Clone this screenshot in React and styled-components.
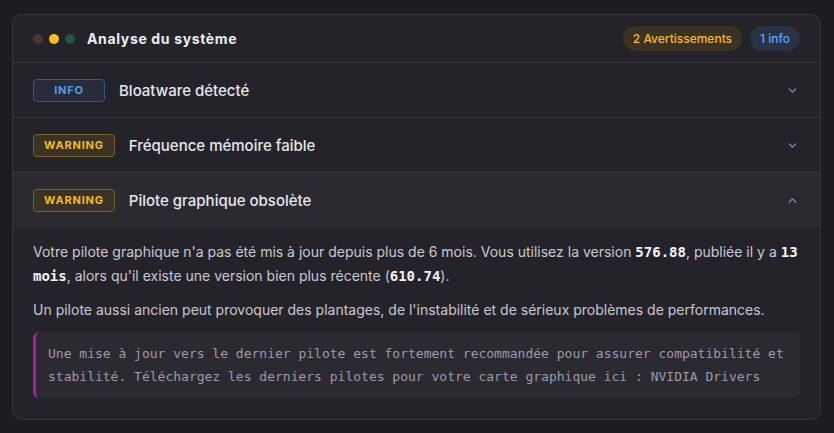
import React, { useState } from "react";
import styled, { createGlobalStyle } from "styled-components";

const GlobalStyle = createGlobalStyle`
  html, body {
    margin: 0;
    padding: 0;
    background: #1d1c21;
  }
  body {
    font-family: Inter, "Noto Sans", sans-serif;
    -webkit-font-smoothing: antialiased;
  }
`;

const Page = styled.div`
  padding: 14px 13px 14px 12px;
`;

const Card = styled.section`
  background: #242329;
  border: 1px solid #36353c;
  border-radius: 10px;
  overflow: hidden;
`;

const Header = styled.header`
  display: flex;
  align-items: center;
  height: 47px;
  padding: 0 20px;
  border-bottom: 1px solid #36353c;
`;

const Dots = styled.div`
  display: flex;
  gap: 6px;
  margin-right: 12px;
`;

const Dot = styled.span`
  width: 10px;
  height: 10px;
  border-radius: 50%;
  background: ${(p) => p.$color};
`;

const Title = styled.h1`
  margin: 0;
  flex: 1;
  font-size: 14px;
  font-weight: 700;
  letter-spacing: 0.65px;
  color: #ececf1;
`;

const Pills = styled.div`
  display: flex;
  gap: 8px;
`;

const Pill = styled.span`
  display: inline-flex;
  align-items: center;
  height: 25px;
  padding: 0 10px;
  border-radius: 999px;
  font-size: 12px;
  font-weight: 500;
  background: ${(p) => (p.$tone === "warn" ? "#3a3223" : "#2a3346")};
  color: ${(p) => (p.$tone === "warn" ? "#f6b926" : "#5fa3f5")};
`;

const Item = styled.div`
  border-bottom: ${(p) => (p.$last ? "none" : "1px solid #36353c")};
`;

const RowButton = styled.button`
  display: flex;
  align-items: center;
  width: 100%;
  height: 54px;
  padding: 0 21px 0 20px;
  border: none;
  background: ${(p) => (p.$open ? "#2b2a31" : "transparent")};
  cursor: pointer;
  font-family: inherit;
  text-align: left;
`;

const Level = styled.span`
  display: inline-flex;
  align-items: center;
  justify-content: center;
  box-sizing: border-box;
  min-width: 72px;
  height: 23px;
  padding: 0 10px;
  border-radius: 4px;
  font-size: 11px;
  font-weight: 700;
  letter-spacing: 0.8px;
  ${(p) =>
    p.$level === "info"
      ? `background:#262c3a;border:1px solid #3a5683;color:#5c9ae6;`
      : `background:#3a3325;border:1px solid #76602a;color:#f5b925;`}
`;

const RowTitle = styled.span`
  flex: 1;
  margin-left: 14px;
  font-size: 15px;
  font-weight: 500;
  color: #e7e7ec;
`;

const Chevron = styled.svg`
  width: 13px;
  height: 13px;
  color: #8f8cab;
  transform: ${(p) => (p.$open ? "rotate(180deg)" : "none")};
`;

const Body = styled.div`
  padding: 13px 20px 21px;
  color: #c9c8d1;
  font-size: 14px;
  line-height: 24px;
`;

const Para = styled.p`
  margin: 0 0 10px;
`;

const Code = styled.code`
  font-family: "DejaVu Sans Mono", monospace;
  font-size: 14px;
  line-height: 1;
  font-weight: 700;
  color: #f2f2f6;
`;

const Note = styled.blockquote`
  margin: 0;
  padding: 10px 12px;
  background: #2b2a31;
  border-left: 3px solid #a3229a;
  border-radius: 6px;
  font-family: "DejaVu Sans Mono", monospace;
  font-size: 13px;
  line-height: 23px;
  color: #9d9aa9;
`;

const ChevronIcon = ({ open }) => (
  <Chevron $open={open} viewBox="0 0 24 24" fill="none" stroke="currentColor" strokeWidth="2.5" strokeLinecap="round" strokeLinejoin="round">
    <path d="M6 9l6 6 6-6" />
  </Chevron>
);

const issues = [
  { level: "info", label: "INFO", title: "Bloatware détecté" },
  { level: "warning", label: "WARNING", title: "Fréquence mémoire faible" },
  { level: "warning", label: "WARNING", title: "Pilote graphique obsolète", details: true },
];

export default function App() {
  const [open, setOpen] = useState(2);
  return (
    <>
      <GlobalStyle />
      <Page>
        <Card>
          <Header>
            <Dots>
              <Dot $color="#4b3337" />
              <Dot $color="#fbbf24" />
              <Dot $color="#2a5345" />
            </Dots>
            <Title>Analyse du système</Title>
            <Pills>
              <Pill $tone="warn">2 Avertissements</Pill>
              <Pill $tone="info">1 info</Pill>
            </Pills>
          </Header>
          {issues.map((it, i) => (
            <Item key={i} $last={i === issues.length - 1}>
              <RowButton $open={open === i} onClick={() => setOpen(open === i ? -1 : i)}>
                <Level $level={it.level}>{it.label}</Level>
                <RowTitle>{it.title}</RowTitle>
                <ChevronIcon open={open === i} />
              </RowButton>
              {open === i && it.details && (
                <Body>
                  <Para>
                    Votre pilote graphique n'a pas été mis à jour depuis plus de 6 mois. Vous utilisez la version{" "}
                    <Code>576.88</Code>, publiée il y a <Code>13 mois</Code>, alors qu'il existe une version bien plus
                    récente (<Code>610.74</Code>).
                  </Para>
                  <Para>
                    Un pilote aussi ancien peut provoquer des plantages, de l'instabilité et de sérieux problèmes de
                    performances.
                  </Para>
                  <Note>
                    Une mise à jour vers le dernier pilote est fortement recommandée pour assurer compatibilité et
                    stabilité. Téléchargez les derniers pilotes pour votre carte graphique ici : NVIDIA Drivers
                  </Note>
                </Body>
              )}
            </Item>
          ))}
        </Card>
      </Page>
    </>
  );
}
